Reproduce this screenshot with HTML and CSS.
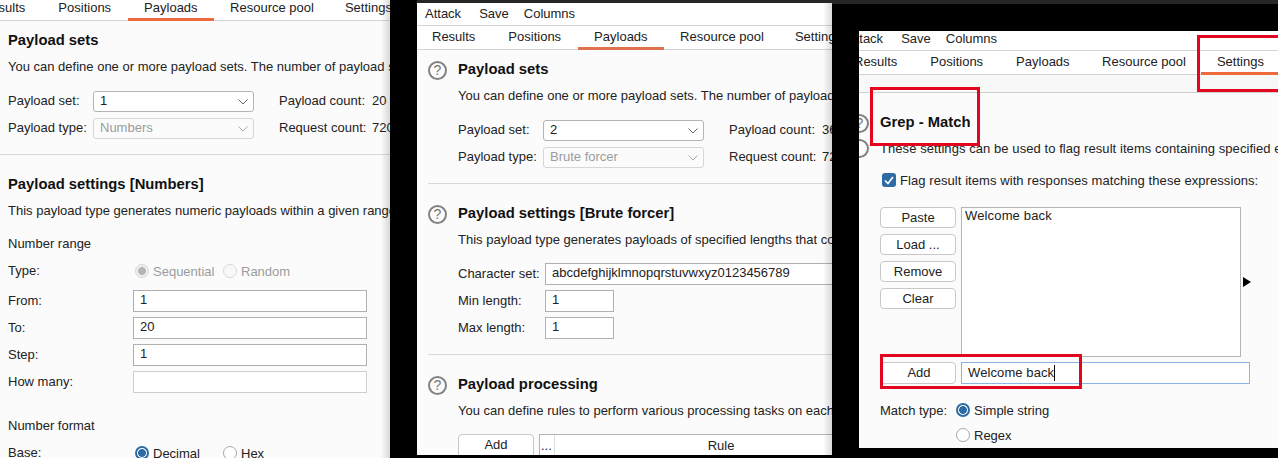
FILE: index.html
```html
<!DOCTYPE html>
<html lang="en">
<head>
    <meta charset="UTF-8">
    <meta name="viewport" content="width=device-width, initial-scale=1.0">
    <title>Intruder attack windows</title>
    <link rel="stylesheet" href="styles.css">
</head>
<body>
    <div class="top-strip"></div>

    <!-- Window 1: payload set 1, numbers -->
    <div class="window window-one">
        <div class="window-inner">
            <div class="menu"><span>Attack</span><span>Save</span><span class="menu-last">Columns</span></div>
            <div class="tabs">
                <span class="tab">Results</span><span class="tab">Positions</span><span class="tab active">Payloads</span><span class="tab tab-pool">Resource pool</span><span class="tab tab-settings">Settings</span>
            </div>
            <section class="section first">
                <div class="section-head"><span class="help">?</span><h2>Payload sets</h2></div>
                <p class="desc">You can define one or more payload sets. The number of payload sets depends on the attack type defined in the Positions tab.</p>
                <div class="set-row">
                    <label class="set-label">Payload set:</label>
                    <div class="select"><span>1</span><svg width="10" height="6" viewBox="0 0 10 6"><path d="M.5.5l4.5 4.5 4.5-4.5" fill="none" stroke="#666" stroke-width="1"/></svg></div>
                    <span class="count-label">Payload count:</span><span>20</span>
                </div>
                <div class="set-row">
                    <label class="set-label">Payload type:</label>
                    <div class="select disabled"><span>Numbers</span><svg width="10" height="6" viewBox="0 0 10 6"><path d="M.5.5l4.5 4.5 4.5-4.5" fill="none" stroke="#aaa" stroke-width="1"/></svg></div>
                    <span class="count-label">Request count:</span><span>720</span>
                </div>
            </section>
            <section class="section">
                <div class="section-head"><span class="help">?</span><h2>Payload settings [Numbers]</h2></div>
                <p class="desc">This payload type generates numeric payloads within a given range and in a specified format.</p>
                <div class="sub-title range-title">Number range</div>
                <div class="num-row type-row">
                    <label>Type:</label>
                    <span class="radio disabled-on"></span><span class="muted radio-text">Sequential</span>
                    <span class="radio disabled-off"></span><span class="muted">Random</span>
                </div>
                <div class="num-row"><label>From:</label><input class="field num-field" type="text" value="1"></div>
                <div class="num-row"><label>To:</label><input class="field num-field" type="text" value="20"></div>
                <div class="num-row"><label>Step:</label><input class="field num-field" type="text" value="1"></div>
                <div class="num-row"><label>How many:</label><input class="field num-field faint" type="text"></div>
                <div class="sub-title format-title">Number format</div>
                <div class="num-row type-row">
                    <label>Base:</label>
                    <span class="radio on"></span><span class="radio-text">Decimal</span>
                    <span class="radio"></span><span>Hex</span>
                </div>
            </section>
        </div>
    </div>

    <!-- Window 2: payload set 2, brute forcer -->
    <div class="window window-two">
        <div class="window-inner">
            <div class="menu"><span>Attack</span><span>Save</span><span class="menu-last">Columns</span></div>
            <div class="tabs">
                <span class="tab">Results</span><span class="tab">Positions</span><span class="tab active dull">Payloads</span><span class="tab tab-pool">Resource pool</span><span class="tab tab-settings">Settings</span>
            </div>
            <section class="section first">
                <div class="section-head"><span class="help">?</span><h2>Payload sets</h2></div>
                <p class="desc">You can define one or more payload sets. The number of payload sets depends on the attack type defined in the Positions tab.</p>
                <div class="set-row">
                    <label class="set-label">Payload set:</label>
                    <div class="select"><span>2</span><svg width="10" height="6" viewBox="0 0 10 6"><path d="M.5.5l4.5 4.5 4.5-4.5" fill="none" stroke="#666" stroke-width="1"/></svg></div>
                    <span class="count-label">Payload count:</span><span>36</span>
                </div>
                <div class="set-row">
                    <label class="set-label">Payload type:</label>
                    <div class="select disabled"><span>Brute forcer</span><svg width="10" height="6" viewBox="0 0 10 6"><path d="M.5.5l4.5 4.5 4.5-4.5" fill="none" stroke="#aaa" stroke-width="1"/></svg></div>
                    <span class="count-label">Request count:</span><span>720</span>
                </div>
            </section>
            <section class="section">
                <div class="section-head"><span class="help">?</span><h2>Payload settings [Brute forcer]</h2></div>
                <p class="desc">This payload type generates payloads of specified lengths that contain all possible combinations of the character set.</p>
                <div class="brute-rows">
                    <div class="brute-row"><label>Character set:</label><input class="field charset" type="text" value="abcdefghijklmnopqrstuvwxyz0123456789"></div>
                    <div class="brute-row"><label>Min length:</label><input class="field short" type="text" value="1"></div>
                    <div class="brute-row"><label>Max length:</label><input class="field short" type="text" value="1"></div>
                </div>
            </section>
            <section class="section">
                <div class="section-head"><span class="help">?</span><h2>Payload processing</h2></div>
                <p class="desc">You can define rules to perform various processing tasks on each payload before it is used.</p>
                <div class="rule-row">
                    <button class="btn" type="button">Add</button>
                    <div class="rule-table"><span class="rule-dots">...</span><span class="rule-head">Rule</span></div>
                </div>
            </section>
        </div>
    </div>

    <!-- Window 3: settings, grep match -->
    <div class="window window-three">
        <div class="window-inner">
            <div class="menu"><span>Attack</span><span>Save</span><span class="menu-last">Columns</span></div>
            <div class="tabs">
                <span class="tab">Results</span><span class="tab">Positions</span><span class="tab">Payloads</span><span class="tab tab-pool">Resource pool</span><span class="tab tab-settings active">Settings</span>
            </div>
            <div class="settings-strip"></div>
            <section class="section grep">
                <div class="section-head"><span class="help">?</span><h2>Grep - Match</h2></div>
                <div class="desc-row">
                    <span class="help blank"></span>
                    <p class="desc">These settings can be used to flag result items containing specified expressions.</p>
                </div>
                <div class="check-row">
                    <span class="checkbox"><svg width="10" height="9" viewBox="0 0 10 9"><path d="M1 4.5l3 3 5-6.5" fill="none" stroke="#fff" stroke-width="1.7"/></svg></span>
                    <span>Flag result items with responses matching these expressions:</span>
                </div>
                <div class="list-row">
                    <div class="btn-col">
                        <button class="btn" type="button">Paste</button>
                        <button class="btn" type="button">Load ...</button>
                        <button class="btn" type="button">Remove</button>
                        <button class="btn" type="button">Clear</button>
                    </div>
                    <div class="list-box">Welcome back</div>
                    <span class="arrow"></span>
                </div>
                <div class="add-row">
                    <button class="btn" type="button">Add</button>
                    <div class="add-input"><span>Welcome back</span><span class="caret"></span></div>
                </div>
                <div class="match-row">
                    <label>Match type:</label>
                    <span class="radio on"></span><span>Simple string</span>
                </div>
                <div class="match-row regex">
                    <span class="radio"></span><span>Regex</span>
                </div>
            </section>
        </div>
    </div>

    <!-- Red annotation boxes drawn over the screenshot -->
    <div class="mark mark-settings"></div>
    <div class="mark mark-grep"></div>
    <div class="mark mark-add"></div>
</body>
</html>
```

FILE: styles.css
```css
* {
    box-sizing: border-box;
}
html, body {
    height: 100%;
}
body {
    margin: 0;
    background-color: #000;
    font-family: "Liberation Sans", Arial, sans-serif;
    font-size: 13px;
    color: #222;
    overflow: hidden;
    position: relative;
}
.top-strip {
    position: absolute;
    left: 417px;
    right: 0;
    top: 0;
    height: 4px;
    background-color: #262626;
}

/* windows sit on a free canvas, each one clipped by what covers it */
.window {
    position: absolute;
    overflow: hidden;
    background-color: #fbfbfb;
}
.window-one {
    left: 0;
    top: 0;
    width: 390px;
    height: 458px;
}
.window-two {
    left: 417px;
    top: 3px;
    width: 415px;
    height: 452px;
}
.window-three {
    left: 859px;
    top: 31px;
    width: 419px;
    height: 417px;
}
.window-one::after, .window-two::after {
    content: "";
    position: absolute;
    top: 0;
    right: 0;
    bottom: 0;
    width: 9px;
    background: linear-gradient(to right, rgba(0, 0, 0, 0), rgba(0, 0, 0, 0.14));
}
.window-inner {
    width: 640px;
    white-space: nowrap;
}
.window-one .window-inner {
    margin-left: -33px;
    margin-top: -26px;
}
.window-three .window-inner {
    margin-left: -20px;
    margin-top: -3px;
}

.menu {
    display: flex;
    gap: 18px;
    height: 23px;
    padding-left: 8px;
    padding-bottom: 2px;
    align-items: center;
    background-color: #fff;
    border-bottom: 1px solid #d4d4d4;
}
.menu-last {
    margin-left: -3px;
}
.tabs {
    display: flex;
    gap: 1px;
    height: 24px;
    background-color: #fff;
    border-bottom: 1px solid #d4d4d4;
}
.tab {
    padding: 0 16px;
    line-height: 22px;
    height: 24px;
}
.tab:first-child {
    margin-left: -1px;
}
.tab-pool {
    margin-left: -0.5px;
}
.tab-settings {
    margin-left: -2px;
}
.tab.active {
    border-bottom: 3px solid #ee6a3c;
}
.tab.dull {
    border-bottom-color: #e0714f;
}
.settings-strip {
    height: 18px;
    background-color: #f8f8f8;
    border-bottom: 1px solid #d0d0d0;
}

.section {
    margin-left: 11px;
    padding-top: 19px;
    padding-bottom: 15px;
    border-bottom: 1px solid #d8d8d8;
}
.section.first {
    padding-top: 9px;
}
.section.grep {
    border-bottom: none;
    padding-top: 19px;
}
.section-head {
    display: flex;
    align-items: center;
    gap: 11px;
    height: 20px;
}
.help {
    width: 19px;
    height: 19px;
    flex: none;
    align-self: flex-start;
    margin-top: 2px;
    border: 2px solid #828282;
    border-radius: 50%;
    color: #777;
    font-size: 14px;
    line-height: 15px;
    text-align: center;
}
.help.blank {
    margin-top: 0;
    align-self: center;
    background-color: #fbfbfb;
}
h2 {
    margin: 0 0 1px;
    font-size: 14.8px;
    font-weight: bold;
    color: #111;
}
.desc {
    margin: 9px 0 0 30px;
    line-height: 16px;
}
.desc-row {
    display: flex;
    align-items: center;
    gap: 11px;
    margin-top: 7px;
}
.desc-row .desc {
    margin: 0;
    letter-spacing: 0.07px;
}

.set-row {
    display: flex;
    align-items: center;
    height: 21px;
    margin: 6px 0 0 30px;
}
.desc + .set-row {
    margin-top: 16px;
}
.set-row > span, .set-row > label {
    margin-bottom: 2px;
}
.set-label {
    width: 85px;
}
.select {
    display: flex;
    align-items: center;
    justify-content: space-between;
    width: 161px;
    height: 21px;
    padding: 0 5px 2px 6px;
    background-color: #fff;
    border: 1px solid #b4b4b4;
    border-radius: 3px;
}
.select svg {
    margin-top: 3px;
}
.select.disabled {
    background-color: #fbfbfb;
    border-color: #d6d6d6;
    color: #9b9b9b;
}
.count-label {
    width: 93px;
    margin-left: 25px;
}

.field {
    height: 22px;
    padding: 0 6px 3px;
    border: 1px solid #b0b0b0;
    background-color: #fff;
    font-family: inherit;
    font-size: 13px;
    color: #222;
    outline: none;
}
.field.faint {
    border-color: #cfcfcf;
}
.sub-title {
    margin-left: 30px;
    line-height: 16px;
}
.range-title {
    margin-top: 17px;
}
.format-title {
    margin-top: 25px;
}
.num-row {
    display: flex;
    align-items: center;
    height: 22px;
    margin: 5px 0 0 30px;
}
.num-row label {
    width: 125px;
    margin-bottom: 2px;
}
.num-field {
    width: 234px;
}
.type-row {
    margin-top: 8px;
}
.format-title + .type-row {
    margin-top: 8px;
}
.type-row + .num-row {
    margin-top: 8px;
}
.muted {
    color: #9b9b9b;
}
.radio {
    width: 14px;
    height: 14px;
    flex: none;
    margin: 0 4px 0 2px;
    border: 1px solid #a8a8a8;
    border-radius: 50%;
    background-color: #fff;
}
.radio-text {
    width: 68px;
}
.radio.on {
    border: 2px solid #2c6ba3;
    background: radial-gradient(circle, #2c6ba3 0 3.6px, #fff 4.2px);
}
.radio.disabled-on {
    border-color: #d8d8d8;
    background: radial-gradient(circle, #b4b4b4 0 3.6px, #eee 4.2px);
}
.radio.disabled-off {
    border-color: #d8d8d8;
    background-color: #f8f8f8;
}

.brute-rows {
    display: flex;
    flex-direction: column;
    gap: 5px;
    margin: 15px 0 0 30px;
}
.brute-row {
    display: flex;
    align-items: center;
    height: 22px;
}
.brute-row label {
    width: 87px;
    margin-bottom: 2px;
}
.charset {
    width: 400px;
}
.short {
    width: 69px;
}

.btn {
    display: block;
    width: 76px;
    height: 21px;
    padding: 0 0 1px;
    background-color: #fff;
    border: 1px solid #c8c8c8;
    border-radius: 4px;
    font-family: inherit;
    font-size: 13px;
    color: #222;
}
.rule-row {
    display: flex;
    gap: 5px;
    margin: 15px 0 0 30px;
}
.rule-row .btn {
    height: 24px;
    padding-bottom: 4px;
}
.rule-table {
    display: flex;
    width: 400px;
    height: 24px;
    background-color: #fff;
    border: 1px solid #b4b4b4;
}
.rule-dots {
    width: 15px;
    padding-left: 1px;
    padding-top: 3px;
    border-right: 1px solid #ddd;
}
.rule-head {
    width: 332px;
    padding-top: 3px;
    text-align: center;
}

.check-row {
    display: flex;
    align-items: center;
    gap: 4px;
    height: 16px;
    margin: 14px 0 0 32px;
    letter-spacing: 0.07px;
}
.checkbox {
    display: flex;
    align-items: center;
    justify-content: center;
    width: 14px;
    height: 14px;
    background-color: #2c6ba3;
    border-radius: 3px;
}
.list-row {
    display: flex;
    gap: 5px;
    margin: 19px 0 0 30px;
}
.btn-col {
    display: flex;
    flex-direction: column;
    gap: 6px;
}
.list-box {
    width: 280px;
    height: 150px;
    padding: 0 3px;
    background-color: #fff;
    border: 1px solid #b4b4b4;
    line-height: 16px;
    letter-spacing: 0.15px;
}
.arrow {
    align-self: center;
    margin-left: -3px;
    border-left: 8px solid #000;
    border-top: 5px solid transparent;
    border-bottom: 5px solid transparent;
}
.add-row {
    display: flex;
    gap: 5px;
    margin: 5px 0 0 30px;
}
.add-row .btn {
    height: 22px;
    padding: 0 0 2px 2px;
}
.add-input {
    display: flex;
    align-items: center;
    width: 289px;
    height: 22px;
    padding: 0 6px;
    background-color: #fff;
    border: 1px solid #8ab4e6;
    letter-spacing: 0.1px;
}
.add-input span:first-child {
    margin-bottom: 2px;
}
.caret {
    width: 1px;
    height: 16px;
    background-color: #000;
}
.match-row {
    display: flex;
    align-items: center;
    height: 16px;
    margin: 18px 0 0 30px;
}
.match-row label {
    width: 75px;
}
.match-row .radio {
    margin: 0 4px 0 1px;
}
.regex {
    margin-top: 9px;
    padding-left: 75px;
}

/* annotation boxes */
.mark {
    position: absolute;
    border: 3px solid #e4051f;
}
.mark-settings {
    left: 1197px;
    top: 35px;
    width: 90px;
    height: 57px;
}
.mark-grep {
    left: 870px;
    top: 87px;
    width: 110px;
    height: 59px;
}
.mark-add {
    left: 880px;
    top: 354px;
    width: 202px;
    height: 35px;
}
```
